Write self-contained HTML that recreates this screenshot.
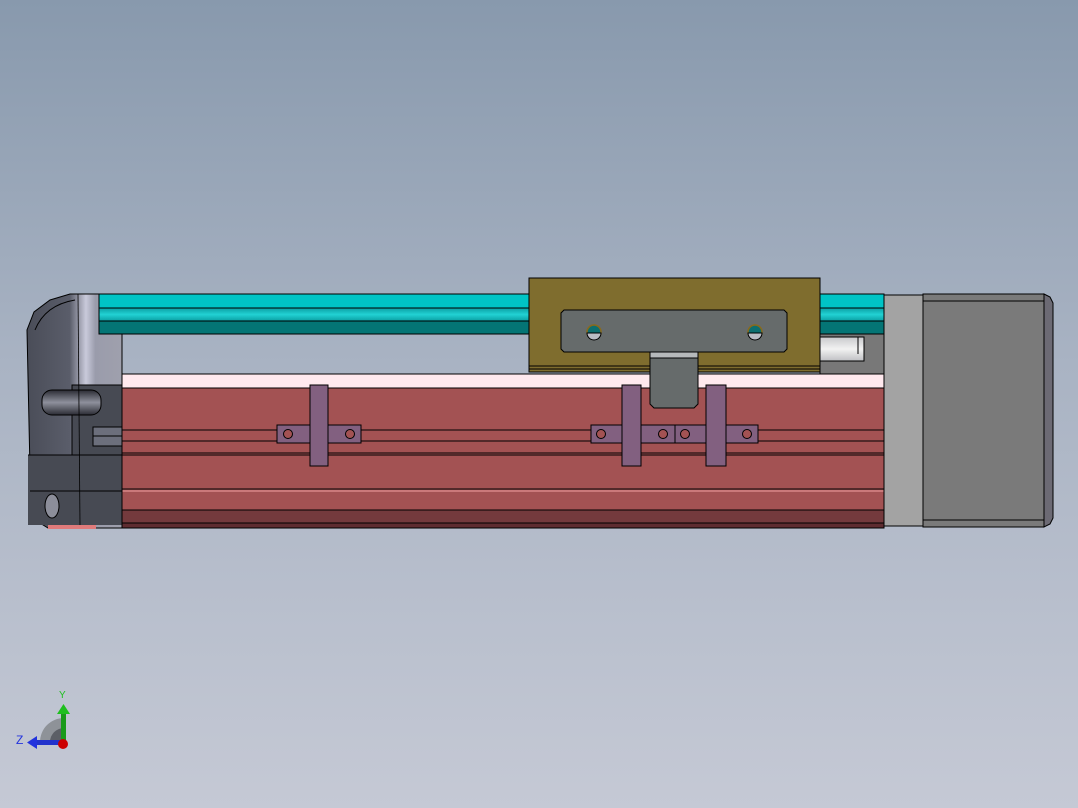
<!DOCTYPE html>
<html><head><meta charset="utf-8"><style>
html,body{margin:0;padding:0;width:1078px;height:808px;overflow:hidden}
body{background:linear-gradient(#8899ad,#a9b3c3 45%,#c5c9d5)}
svg{position:absolute;left:0;top:0}
</style></head><body>
<svg width="1078" height="808" viewBox="0 0 1078 808">
<defs>
<linearGradient id="cap" x1="0" x2="1"><stop offset="0" stop-color="#4a4d58"/><stop offset="0.45" stop-color="#5a5d6a"/><stop offset="0.62" stop-color="#c9cadb"/><stop offset="0.72" stop-color="#9a9cab"/><stop offset="1" stop-color="#9fa0ad"/></linearGradient>
<linearGradient id="cyl" x1="0" y1="0" x2="0" y2="1"><stop offset="0" stop-color="#2a2b33"/><stop offset="0.5" stop-color="#8e909c"/><stop offset="1" stop-color="#2a2b33"/></linearGradient>
<linearGradient id="rod" x1="0" y1="0" x2="0" y2="1"><stop offset="0" stop-color="#c8c9cc"/><stop offset="0.5" stop-color="#f2f2f2"/><stop offset="1" stop-color="#bfc0c3"/></linearGradient>
<linearGradient id="mid" x1="0" y1="0" x2="0" y2="1"><stop offset="0" stop-color="#0a9fa2"/><stop offset="0.5" stop-color="#22d2d4"/><stop offset="1" stop-color="#0a9fa2"/></linearGradient>
</defs>
<g stroke="#000" stroke-width="1">
<!-- back area right of carriage -->
<rect x="820" y="334" width="64" height="40" fill="#787878"/>
<rect x="820" y="337" width="44" height="24" fill="url(#rod)"/>
<line x1="858" y1="337" x2="858" y2="354"/>
<!-- body -->
<rect x="122" y="374" width="762" height="14" fill="#ffe9ee"/>
<rect x="122" y="388" width="762" height="140" fill="#a35253"/>
<rect x="122" y="510" width="762" height="13" fill="#743a3d"/>
<rect x="122" y="523" width="762" height="5" fill="#5e2c30"/>
<line x1="122" y1="430" x2="884" y2="430"/>
<line x1="122" y1="441" x2="884" y2="441"/>
<line x1="122" y1="453" x2="884" y2="453"/>
<line x1="122" y1="455" x2="884" y2="455"/>
<line x1="122" y1="489" x2="884" y2="489"/>
<line x1="122" y1="491" x2="884" y2="491" stroke="#f0a0a0"/>
<!-- end cap -->
<path d="M99 294H122V528H48L35 520L30 470L27 330L34 312L50 300L70 294Z" fill="url(#cap)"/>
<rect x="28" y="455" width="94" height="70" fill="#474a53" stroke="none"/>
<rect x="72" y="385" width="50" height="70" fill="#474a53"/>
<rect x="42" y="390" width="59" height="25" rx="10" fill="url(#cyl)"/>
<rect x="93" y="427" width="29" height="19" fill="#6c6f7c"/>
<line x1="93" y1="436" x2="122" y2="436"/>
<line x1="28" y1="455" x2="122" y2="455"/>
<line x1="30" y1="491" x2="122" y2="491"/>
<line x1="78" y1="294" x2="80" y2="525" stroke-width="0.8"/>
<path d="M35 330Q45 305 75 300" fill="none"/>
<ellipse cx="52" cy="506" rx="7" ry="12" fill="#8c8e9a"/>
<rect x="48" y="525" width="48" height="4" fill="#e07b7b" stroke="none"/>
<line x1="122" y1="334" x2="122" y2="528"/>
<!-- rail -->
<rect x="99" y="294" width="785" height="14" fill="#00c4c6"/>
<rect x="99" y="308" width="785" height="13" fill="url(#mid)"/>
<rect x="99" y="321" width="785" height="13" fill="#047575"/>
<!-- carriage -->
<rect x="529" y="278" width="291" height="94" fill="#7f6d2e"/>
<line x1="529" y1="366" x2="820" y2="366"/>
<line x1="529" y1="369" x2="820" y2="369"/>
<path d="M564 310H784L787 313V349L784 352H564L561 349V313Z" fill="#666b6b"/>
<path d="M650 352H698V404L694 408H654L650 404Z" fill="#666b6b"/>
<rect x="650" y="352" width="48" height="6" fill="#b6b9bb"/>
<circle cx="594" cy="332" r="7" fill="#0c6e6f" stroke="#8a6a1a" stroke-width="1.5"/>
<path d="M587 333H601A7 7 0 0 1 587 333Z" fill="#b9bcc4"/>
<circle cx="755" cy="332" r="7" fill="#0c6e6f" stroke="#8a6a1a" stroke-width="1.5"/>
<path d="M748 333H762A7 7 0 0 1 748 333Z" fill="#b9bcc4"/>
<!-- brackets -->
<g fill="#826080">
<rect x="277" y="425" width="84" height="18"/>
<rect x="591" y="425" width="84" height="18"/>
<rect x="675" y="425" width="83" height="18"/>
<rect x="310" y="385" width="18" height="81"/>
<rect x="622" y="385" width="19" height="81"/>
<rect x="706" y="385" width="20" height="81"/>
</g>
<g fill="#a35253">
<circle cx="288" cy="434" r="4.5"/><circle cx="350" cy="434" r="4.5"/>
<circle cx="601" cy="434" r="4.5"/><circle cx="663" cy="434" r="4.5"/>
<circle cx="685" cy="434" r="4.5"/><circle cx="747" cy="434" r="4.5"/>
</g>
<!-- motor -->
<rect x="884" y="295" width="39" height="231" fill="#a3a3a3"/>
<rect x="923" y="294" width="121" height="233" fill="#7a7a7a"/>
<line x1="923" y1="301" x2="1044" y2="301"/>
<line x1="923" y1="520" x2="1044" y2="520"/>
<path d="M1044 294L1050 297L1053 303V518L1050 524L1044 527Z" fill="#6c6a74"/>
</g>
<!-- triad -->
<path d="M40 742A24 24 0 0 1 64 718V742Z" fill="#8e9298"/>
<path d="M50 742A14 14 0 0 1 64 728V742Z" fill="#5c5f66"/>
<rect x="61" y="713" width="5" height="28" fill="#1a9a1a"/>
<path d="M57 714L63.5 704L70 714Z" fill="#1fbf1f"/>
<rect x="36" y="740" width="26" height="5" fill="#2233cc"/>
<path d="M37 736L27 742.5L37 749Z" fill="#2233dd"/>
<circle cx="63" cy="744" r="5" fill="#cc0000"/>
<text x="59" y="698" font-family="Liberation Sans,sans-serif" font-size="10" fill="#1fbf1f">Y</text>
<text x="16" y="744" font-family="Liberation Sans,sans-serif" font-size="12" fill="#2233dd">Z</text>
</svg>
</body></html>
